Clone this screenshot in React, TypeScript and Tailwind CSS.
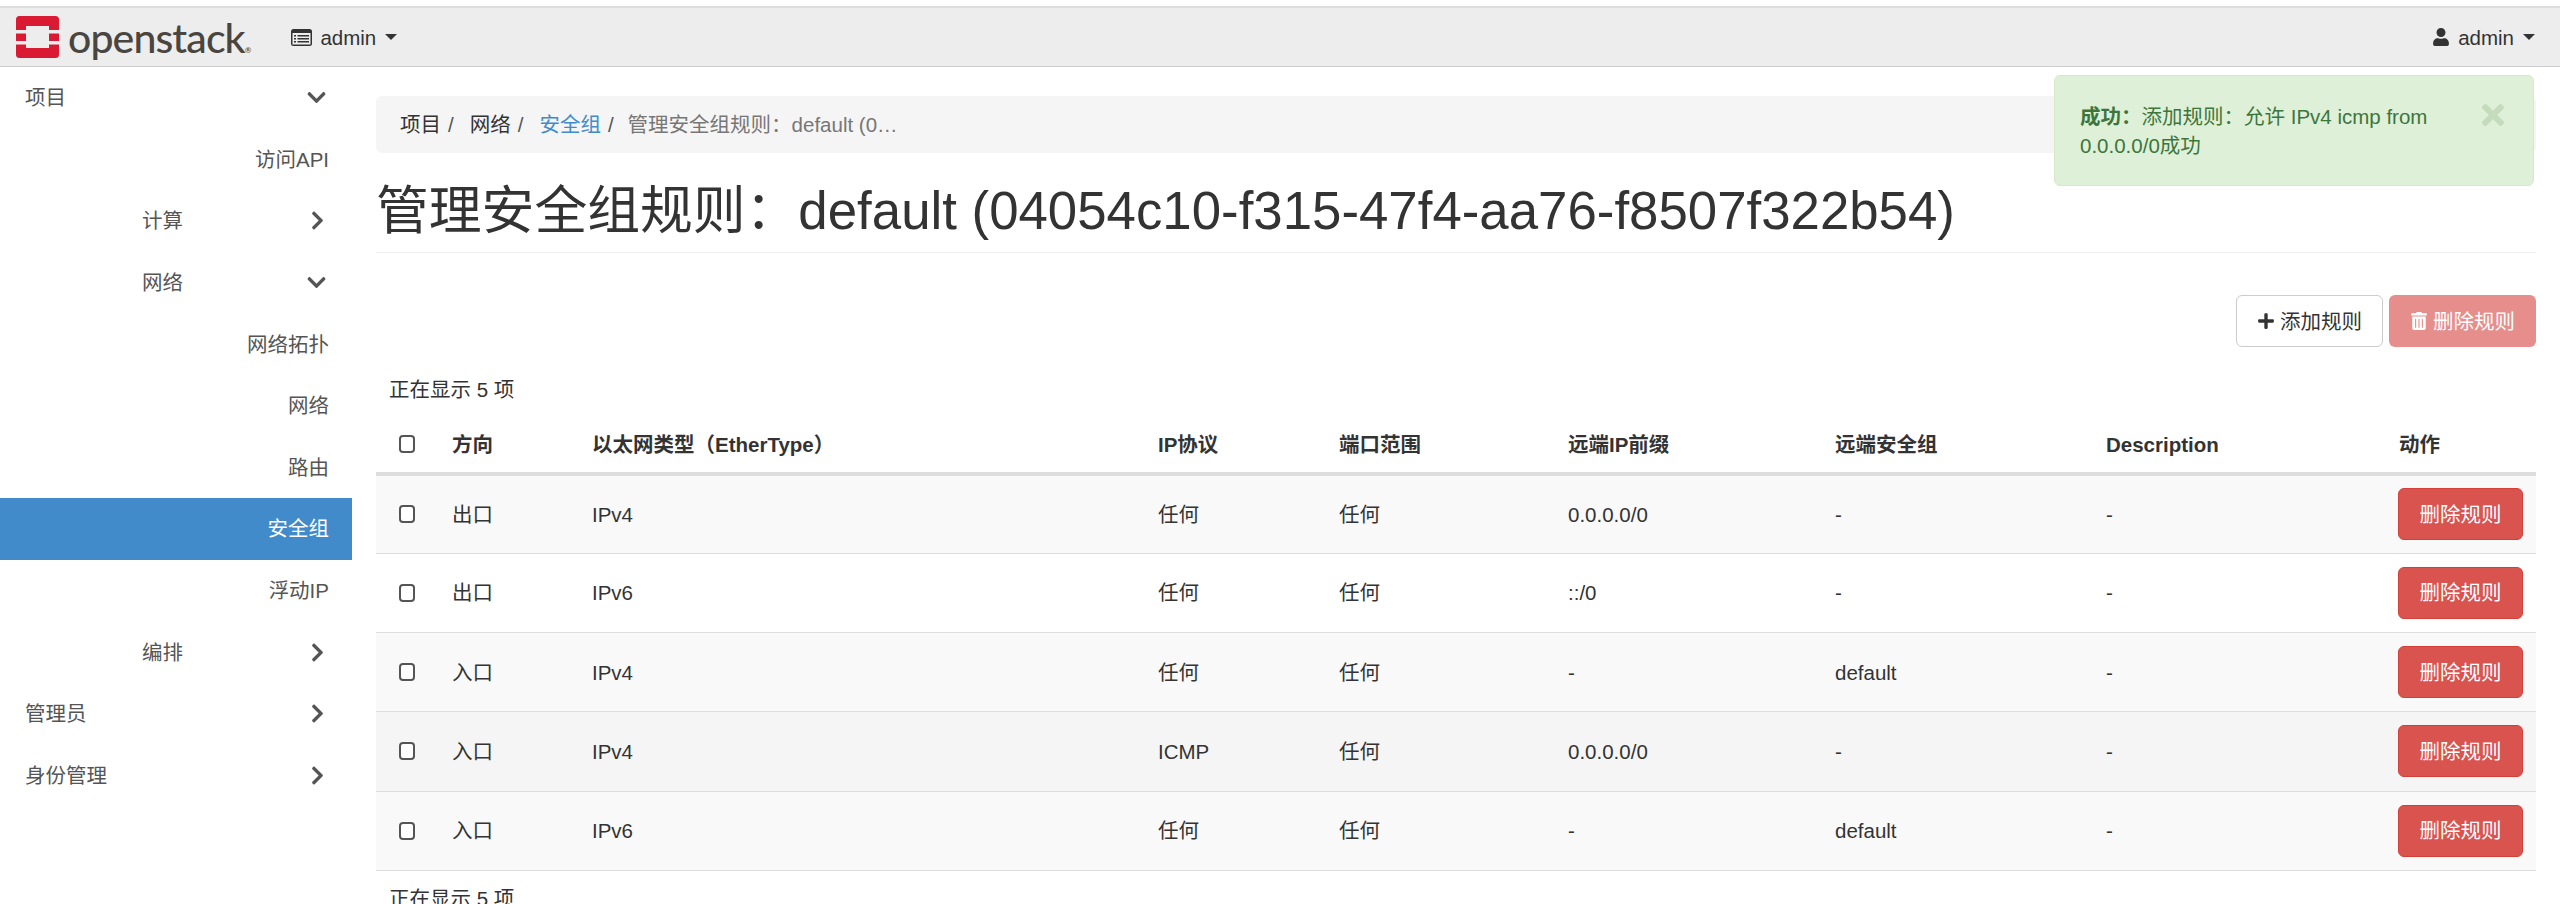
import React from "react";
import {
  FaChevronDown,
  FaChevronRight,
  FaPlus,
  FaTimes,
  FaTrashAlt,
  FaUser,
} from "react-icons/fa";

const font = `font-["Liberation_Sans","Noto_Sans_CJK_SC",sans-serif]`;

const sideItems = [
  { label: "项目", level: 1, icon: "down" },
  { label: "访问API", level: 3 },
  { label: "计算", level: 2, icon: "right" },
  { label: "网络", level: 2, icon: "down" },
  { label: "网络拓扑", level: 3 },
  { label: "网络", level: 3 },
  { label: "路由", level: 3 },
  { label: "安全组", level: 3, active: true },
  { label: "浮动IP", level: 3 },
  { label: "编排", level: 2, icon: "right" },
  { label: "管理员", level: 1, icon: "right" },
  { label: "身份管理", level: 1, icon: "right" },
];

const rules = [
  ["出口", "IPv4", "任何", "任何", "0.0.0.0/0", "-", "-"],
  ["出口", "IPv6", "任何", "任何", "::/0", "-", "-"],
  ["入口", "IPv4", "任何", "任何", "-", "default", "-"],
  ["入口", "IPv4", "ICMP", "任何", "0.0.0.0/0", "-", "-"],
  ["入口", "IPv6", "任何", "任何", "-", "default", "-"],
];

const headers = ["方向", "以太网类型（EtherType）", "IP协议", "端口范围", "远端IP前缀", "远端安全组", "Description", "动作"];
const colWidths = [62, 140, 566, 181, 229, 267, 271, 293, 151];
const rowBg = ["bg-[#f9f9f9]", "bg-white", "bg-[#f9f9f9]", "bg-[#f5f5f5]", "bg-[#f9f9f9]"];

const Check = () => (
  <input
    type="checkbox"
    className="block h-[18px] w-[16px] appearance-none rounded-[4px] border-2 border-[#555] bg-white"
  />
);

const Caret = () => (
  <span className="ml-[9px] inline-block h-0 w-0 border-x-[6px] border-t-[6px] border-x-transparent border-t-[#333]" />
);

const Logo = () => (
  <svg width="43" height="42" viewBox="0 0 43 42" className="shrink-0">
    <rect width="43" height="42" rx="3.5" fill="#da1a32" />
    <rect x="10" y="10" width="23" height="22" fill="#ededed" />
    <rect x="0" y="14" width="10" height="3.5" fill="#ededed" />
    <rect x="0" y="25" width="10" height="3.5" fill="#ededed" />
    <rect x="33" y="14" width="10" height="3.5" fill="#ededed" />
    <rect x="33" y="25" width="10" height="3.5" fill="#ededed" />
  </svg>
);

const ListAlt = () => (
  <svg width="21" height="17" viewBox="0 0 21 17" className="mr-[8px] shrink-0">
    <rect width="21" height="17" rx="2.5" fill="#333" />
    <rect x="1.5" y="4" width="18" height="11.5" fill="#ededed" />
    <rect x="3" y="6" width="2" height="1.5" fill="#333" />
    <rect x="3" y="9" width="2" height="1.5" fill="#333" />
    <rect x="3" y="12" width="2" height="1.5" fill="#333" />
    <rect x="6.5" y="6" width="11.5" height="1.5" fill="#333" />
    <rect x="6.5" y="9" width="11.5" height="1.5" fill="#333" />
    <rect x="6.5" y="12" width="11.5" height="1.5" fill="#333" />
  </svg>
);

const Sidebar = () => (
  <aside className="w-[352px] shrink-0 text-[20.5px] text-[#555]">
    {sideItems.map((item, i) => (
      <div
        key={i}
        className={`flex h-[61.6px] items-center ${item.active ? "bg-[#428bca] text-white" : ""} ${
          item.level === 1 ? "pl-[25px]" : item.level === 2 ? "pl-[142px]" : "justify-end pr-[23px]"
        }`}
      >
        <span>{item.label}</span>
        {item.icon === "down" && <FaChevronDown className="ml-auto mr-[25px] text-[21px] text-[#555]" />}
        {item.icon === "right" && <FaChevronRight className="ml-auto mr-[24px] text-[21px] text-[#555]" />}
      </div>
    ))}
  </aside>
);

export default function App() {
  return (
    <div className={`relative h-[904px] w-full overflow-hidden bg-white text-[20.5px] leading-[29px] text-[#333] ${font}`}>
      {/* Top nav */}
      <div className="pt-[6px]">
        <header className="flex h-[61px] items-center border-t-2 border-b border-t-[#ddd] border-b-[#ccc] bg-[#ededed] pl-[16px] pr-[25px]">
          <Logo />
          <span className="ml-[9px] font-['Lato',sans-serif] text-[41px] font-medium leading-none tracking-[-0.9px] text-[#4a4540]">
            openstack<span className="text-[8px] tracking-normal">®</span>
          </span>
          <div className="ml-[40px] flex items-center">
            <ListAlt />
            <span>admin</span>
            <Caret />
          </div>
          <div className="ml-auto flex items-center">
            <FaUser className="mr-[8px] text-[18px]" />
            <span>admin</span>
            <Caret />
          </div>
        </header>
      </div>

      <div className="flex">
        <Sidebar />
        <main className="min-w-0 flex-1 pl-[24px] pr-[24px] pt-[29px]">
          {/* Breadcrumb */}
          <nav className="flex h-[57px] items-center rounded-[6px] bg-[#f5f5f5] pl-[24px]">
            <span>项目</span>
            <span className="ml-[7px] mr-[16px] text-[#555]">/</span>
            <span>网络</span>
            <span className="ml-[7px] mr-[16px] text-[#555]">/</span>
            <span className="text-[#428bca]">安全组</span>
            <span className="ml-[7px] mr-[14px] text-[#555]">/</span>
            <span className="text-[#777]">管理安全组规则：default (0…</span>
          </nav>

          <h1 className="mt-[23px] h-[77px] border-b border-[#eee] text-[52.8px] leading-[70px] font-normal">
            管理安全组规则：default (04054c10-f315-47f4-aa76-f8507f322b54)
          </h1>

          <div className="mt-[42px] flex justify-end gap-[6px]">
            <button className="flex h-[52px] w-[147px] items-center justify-center rounded-[6px] border border-[#ccc] bg-white">
              <FaPlus className="mr-[5px] text-[18px]" />
              添加规则
            </button>
            <button className="flex h-[52px] w-[147px] items-center justify-center rounded-[6px] bg-[#e58e8b] text-white">
              <FaTrashAlt className="mr-[5px] text-[18px]" />
              删除规则
            </button>
          </div>

          <div className="mt-[28px] pl-[13px]">正在显示 5 项</div>

          <table className="mt-[12px] w-[2160px] table-fixed border-collapse">
            <colgroup>
              {colWidths.map((w, i) => (
                <col key={i} style={{ width: w }} />
              ))}
            </colgroup>
            <thead>
              <tr className="h-[58px] border-b-4 border-[#ddd]">
                <th className="pl-[23px]">
                  <Check />
                </th>
                {headers.map((h) => (
                  <th key={h} className="px-[14px] text-left font-bold">
                    {h}
                  </th>
                ))}
              </tr>
            </thead>
            <tbody>
              {rules.map((row, i) => (
                <tr key={i} className={`h-[79.25px] border-b border-[#ddd] ${rowBg[i]}`}>
                  <td className="pl-[23px]">
                    <Check />
                  </td>
                  {row.map((cell, j) => (
                    <td key={j} className="px-[14px]">
                      {cell}
                    </td>
                  ))}
                  <td className="pl-[13px]">
                    <button className="h-[52px] w-[125px] rounded-[6px] border border-[#d43f3a] bg-[#d9534f] text-white">
                      删除规则
                    </button>
                  </td>
                </tr>
              ))}
            </tbody>
          </table>

          <div className="mt-[13px] pl-[13px]">正在显示 5 项</div>
        </main>
      </div>

      {/* Flash message */}
      <div className="absolute left-[2054px] top-[75px] h-[111px] w-[480px] rounded-[6px] border border-[#d6e9c6] bg-[#dff0d8] pl-[25px] pr-[60px] pt-[26px] text-[#3c763d]">
        <strong>成功：</strong>添加规则：允许 IPv4 icmp from 0.0.0.0/0成功
        <FaTimes className="absolute right-[24px] top-[23px] text-[32px] text-[#c4dcbc]" />
      </div>
    </div>
  );
}
